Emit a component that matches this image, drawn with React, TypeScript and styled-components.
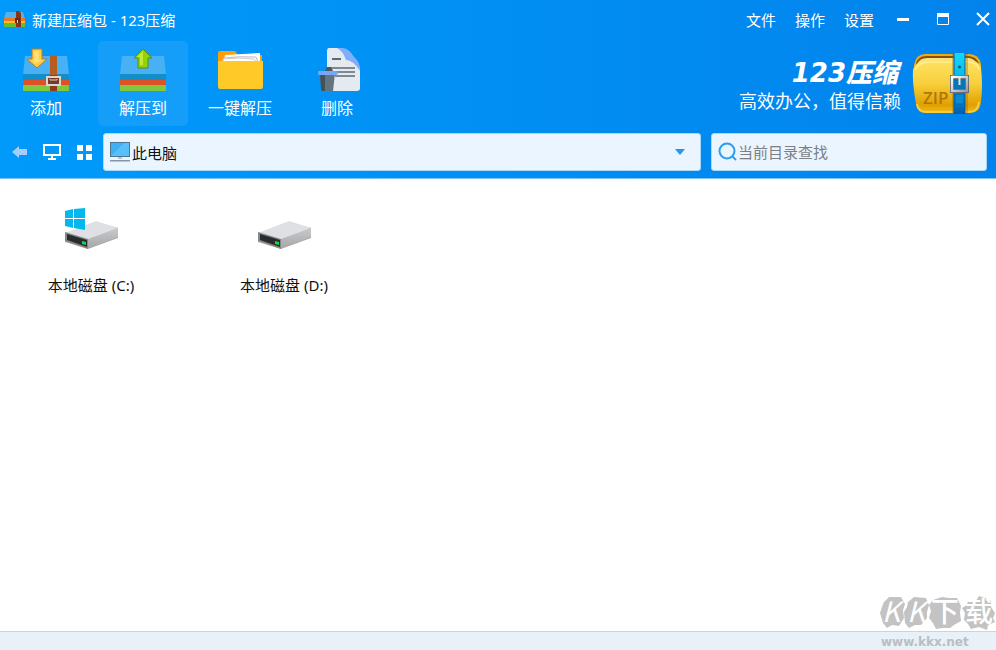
import React from 'react';
import styled, { createGlobalStyle } from 'styled-components';

const GlobalStyle = createGlobalStyle`
  *, *::before, *::after { box-sizing: border-box; }
  body {
    margin: 0;
    font-family: "Noto Sans", "Noto Sans CJK SC", sans-serif;
    font-size: 15px;
    color: #111;
    background: #fff;
  }
  button, input { font: inherit; color: inherit; }
  svg { display: block; flex: none; }
`;

const Window = styled.div`
  display: flex;
  flex-direction: column;
  min-height: 100vh;
`;

const Header = styled.header`
  background: linear-gradient(90deg, #009afb 0%, #0190f4 45%, #0283ec 100%);
  border-bottom: 1px solid #7cc2f6;
  color: #fff;
`;

const TitleBar = styled.div`
  display: flex;
  align-items: center;
  height: 40px;
  padding: 0 6px 2px 4px;
`;

const Title = styled.h1`
  flex: 1;
  margin: 0 0 0 7px;
  font-size: 15px;
  font-weight: 400;
`;

const PlainButton = styled.button`
  display: flex;
  align-items: center;
  justify-content: center;
  padding: 0;
  border: 0;
  background: none;
  cursor: pointer;
`;

const Menu = styled.nav`
  display: flex;
  gap: 19px;
  margin-right: 22px;
`;

const WindowControls = styled.div`
  display: flex;
  gap: 26px;
`;

const Toolbar = styled.div`
  display: flex;
  justify-content: space-between;
  height: 86px;
  padding: 1px 13px 0 1px;
`;

const Tools = styled.div`
  display: flex;
  gap: 7px;
`;

const ToolButton = styled(PlainButton)<{ $active?: boolean }>`
  flex-direction: column;
  justify-content: flex-start;
  gap: 1px;
  width: 90px;
  height: 85px;
  padding-top: 6px;
  border-radius: 5px;
  background: ${(p) => (p.$active ? '#149ef9' : 'transparent')};
  font-size: 16px;
  line-height: 24px;
`;

const Brand = styled.div`
  display: flex;
  align-items: center;
  gap: 11px;
`;

const BrandText = styled.div`
  padding-top: 4px;
  text-align: right;
`;

const BrandName = styled.div`
  padding-right: 3px;
  font-family: "DejaVu Sans", "Noto Sans CJK SC", sans-serif;
  font-size: 26px;
  font-weight: 900;
  font-style: italic;
  line-height: 28px;
`;

const Tagline = styled.div`
  font-family: "Noto Sans CJK SC", sans-serif;
  font-size: 18px;
  line-height: 26px;
`;

const NavRow = styled.div`
  display: flex;
  align-items: center;
  padding: 7px 9px 7px 12px;
`;

const NavButtons = styled.div`
  display: flex;
  align-items: center;
  gap: 15px;
  margin-right: 11px;
`;

const Field = styled.div<{ $search?: boolean }>`
  display: flex;
  align-items: center;
  gap: ${(p) => (p.$search ? 0 : 2)}px;
  flex: ${(p) => (p.$search ? '0 0 276px' : '1 1 0')};
  min-width: 0;
  height: 38px;
  margin-left: ${(p) => (p.$search ? 10 : 0)}px;
  padding: 0 ${(p) => (p.$search ? 7 : 15)}px 0 6px;
  border: 1px solid #a9d7f8;
  border-radius: 3px;
  background: #eaf5ff;
`;

const TextInput = styled.input`
  flex: 1;
  min-width: 0;
  padding: 0;
  border: 0;
  outline: 0;
  background: none;
  color: #111;
  &::placeholder { color: #7b8085; opacity: 1; }
`;

const Content = styled.main`
  flex: 1;
  padding: 27px 0 0 1px;
`;

const DriveGrid = styled.div`
  display: flex;
  flex-wrap: wrap;
  gap: 13px;
`;

const Drive = styled(PlainButton)`
  flex-direction: column;
  gap: 23px;
  width: 180px;
  line-height: 24px;
`;

const StatusBar = styled.footer`
  position: relative;
  height: 19px;
  border-top: 1px solid #bdd7ec;
  background: #e9f1f8;
`;

const Watermark = styled.div`
  position: absolute;
  right: 0;
  bottom: 0;
`;

const Chest = ({ strap }: { strap: boolean }) => (
  <svg width="48" height="48" viewBox="0 0 48 48" aria-hidden="true">
    <path d="M3 9h42l2 19H1z" fill="#48b0f5" />
    <path d="M1 27h46v7H1z" fill="#128fc9" />
    <path d="M1 33h46v6H1z" fill="#dc5128" />
    <path d="M1 38h46v6H1z" fill="#7fc73c" />
    {strap && (
      <>
        <path d="M28 9h7v20h-7z" fill="#b65e22" />
        <path d="M28 28h7v16h-7z" fill="#8b3c20" />
        <path d="M25 30h13v8H25z" fill="#7b3825" stroke="#d7d7d5" strokeWidth="2" />
        <path d="M28 32v1h7v-1" fill="none" stroke="#d8d3ce" />
        <path d="M10 2h10v10h5L15 21 5 12h5z" fill="#ffcf3e" stroke="#b97832" />
        <path d="M12 4h5v9h3l-8 4z" fill="#ffe070" />
      </>
    )}
    {!strap && (
      <>
        <path d="M24 2l9 9h-4v10H19V11h-4z" fill="#91d400" stroke="#568b16" />
        <path d="M24 4l-6 6h3v8h3z" fill="#bfea39" />
      </>
    )}
  </svg>
);

const Folder = () => (
  <svg width="48" height="48" viewBox="0 0 48 48" aria-hidden="true">
    <path d="M4 4h15l3 4h24v12H2V6q0-2 2-2z" fill="#ff9c08" />
    <path d="M9 8l35-2v12H7z" fill="#fff" />
    <path d="M8 11q15-2 32-1l2 5" fill="none" stroke="#bbb" />
    <path d="M7 12q16-2 31 0l3 4H7z" fill="#fff" stroke="#ccc" />
    <path d="M2 14h45v25q0 3-2 3H4q-2 0-2-3z" fill="#ffc928" />
  </svg>
);

const Trash = () => (
  <svg width="48" height="48" viewBox="0 0 48 48" aria-hidden="true">
    <path d="M16 1h13q16 9 18 22v18q0 3-3 3H14V4q0-3 2-3z" fill="#e4eaf0" />
    <path d="M24 1h5q7 0 12 9 6 4 6 14-7-11-14-11-3-9-9-12z" fill="#80aefa" />
    <path d="M19 12h9" stroke="#5c6a71" strokeWidth="2" />
    <path d="M18 21h24M18 25h24M22 29h20" stroke="#5c6a71" strokeWidth="1.5" />
    <path d="M13 22l1-2h4l2 4h-8z" fill="#4a5960" />
    <path d="M7 26h15l-2 18h-10q-2 0-2-2z" fill="#62747e" />
    <path d="M7 26h5v18h-2q-2 0-2-2z" fill="#42515a" />
    <path d="M6 24h17q2 0 2 2t-2 2H6q-1 0-1-2t1-2z" fill="#78a8f5" />
  </svg>
);

const AppIcon = () => (
  <svg width="21" height="18" viewBox="0 0 21 18" aria-hidden="true">
    <path d="M2 2h17l2 7H0z" fill="#54b2ea" />
    <path d="M0 8h21v3H0z" fill="#f07920" />
    <path d="M0 11h21v2H0z" fill="#ffbd2a" />
    <path d="M0 13h21v4H0z" fill="#65bd36" />
    <path d="M12 1h3l2 2v14h-5z" fill="#8b3517" />
    <path d="M11 8h5v5h-5z" fill="#682b18" />
    <path d="M13 10h1v3h-1z" fill="#f5d6af" />
  </svg>
);

const ZipLogo = () => (
  <svg width="71" height="62" viewBox="0 0 71 62" aria-hidden="true">
    <defs>
      <linearGradient id="gold" x2="0" y2="1">
        <stop stopColor="#ffe264" />
        <stop offset=".45" stopColor="#f8cf3b" />
        <stop offset=".85" stopColor="#e0a000" />
        <stop offset="1" stopColor="#f3bd1c" />
      </linearGradient>
      <linearGradient id="belt" x2="0" y2="1">
        <stop stopColor="#16d9fb" />
        <stop offset=".45" stopColor="#07b3e8" />
        <stop offset="1" stopColor="#045bae" />
      </linearGradient>
      <linearGradient id="silver" x2="1" y2="1">
        <stop stopColor="#fff" />
        <stop offset="1" stopColor="#979a9e" />
      </linearGradient>
    </defs>
    <path d="M13 1h44q10 0 12 10v9H2v-8Q4 1 13 1z" fill="#e9ad18" />
    <path d="M4 11Q6 3 14 3h43q8 1 10 8l-8-4H15z" fill="#895108" />
    <path d="M5 11Q8 5 15 5h42q6 1 9 7l-9-3H15z" fill="#fae18a" />
    <path d="M4 12q5-5 12-5h40q11 0 13 8 2 16 0 34-1 11-11 11H14Q5 60 4 51 0 28 1 17q0-3 3-5z" fill="url(#gold)" />
    <path d="M3 17q4-8 13-8h40q9 0 11 7" fill="none" stroke="#fff097" strokeWidth="1.5" />
    <path d="M5 51q1 8 10 8h42q9 0 10-10" fill="none" stroke="#f9ce3d" strokeWidth="2" />
    <text x="11" y="51" fontFamily="Open Sans, sans-serif" fontSize="17" fontWeight="600" fill="#b17508">ZIP</text>
    <path d="M40 1h3v60h-3zM54 1h2v60h-2z" fill="#8b6820" opacity=".35" />
    <path d="M42 0h11v61H42z" fill="url(#belt)" />
    <path d="M42 0v61M53 0v61" stroke="#07569b" />
    <circle cx="47.5" cy="14" r="1.5" fill="#075b83" />
    <path d="M43 41h9v8q0 2-2 2h-5q-2 0-2-2z" fill="#098bd3" stroke="#0766af" />
    <path d="M40 24h15v14H40z" fill="#0875b6" stroke="#555c63" strokeWidth="4" />
    <path d="M40 24h15v14H40z" fill="none" stroke="url(#silver)" strokeWidth="2.5" />
    <path d="M47.500 23v9" stroke="#e3e8eb" strokeWidth="2" />
  </svg>
);

const DriveIcon = ({ system, id }: { system: boolean; id: string }) => (
  <svg width="56" height="44" viewBox="0 0 56 44" aria-hidden="true">
    <defs>
      <linearGradient id={id} x2="0" y2="1">
        <stop stopColor="#c8c9ca" />
        <stop offset="1" stopColor="#a7a8a9" />
      </linearGradient>
    </defs>
    <path d="M2 28l31-12 22 6v10L25 43 2 36z" fill="#aaa" />
    <path d="M2 27l31-12 22 7-30 12z" fill="#dfe0e4" />
    <path d="M25 33l30-11v9L25 42z" fill={`url(#${id})`} />
    <path d="M2 26l23 7v10L2 35z" fill="#85878a" />
    <path d="M4 28l20 6v7L4 34z" fill="#292c2e" />
    <path d="M19 35l4 1v3l-4-1z" fill="#18d642" />
    {system && (
      <path d="M2 5l8-2v9H2zM11 3l11-1v10H11zM2 13h8v9l-8-2zM11 13h11v11l-11-2z" fill="#04b8ef" />
    )}
  </svg>
);

const tools = [
  { label: '添加', icon: <Chest strap /> },
  { label: '解压到', icon: <Chest strap={false} />, active: true },
  { label: '一键解压', icon: <Folder /> },
  { label: '删除', icon: <Trash /> },
];

export default function App() {
  return (
    <Window>
      <GlobalStyle />
      <Header>
        <TitleBar>
          <AppIcon />
          <Title>新建压缩包 - 123压缩</Title>
          <Menu>
            {['文件', '操作', '设置'].map((item) => (
              <PlainButton key={item}>{item}</PlainButton>
            ))}
          </Menu>
          <WindowControls>
            <PlainButton aria-label="最小化">
              <svg width="14" height="14" viewBox="0 0 14 14"><path d="M1 7.5h12" stroke="#fff" strokeWidth="3" /></svg>
            </PlainButton>
            <PlainButton aria-label="最大化">
              <svg width="14" height="14" viewBox="0 0 14 14"><path d="M1.500 2v10.500h11V2" fill="none" stroke="#fff" /><path d="M1 1h12v4H1z" fill="#fff" /></svg>
            </PlainButton>
            <PlainButton aria-label="关闭">
              <svg width="14" height="14" viewBox="0 0 14 14"><path d="M1 1l12 12M13 1L1 13" stroke="#fff" strokeWidth="2" /></svg>
            </PlainButton>
          </WindowControls>
        </TitleBar>
        <Toolbar>
          <Tools>
            {tools.map((tool) => (
              <ToolButton key={tool.label} $active={tool.active}>
                {tool.icon}
                {tool.label}
              </ToolButton>
            ))}
          </Tools>
          <Brand>
            <BrandText>
              <BrandName>123压缩</BrandName>
              <Tagline>高效办公，值得信赖</Tagline>
            </BrandText>
            <ZipLogo />
          </Brand>
        </Toolbar>
        <NavRow>
          <NavButtons>
            <PlainButton aria-label="后退">
              <svg width="16" height="16" viewBox="0 0 16 16"><path d="M0 8l7-6v3h8v6H7v3z" fill="#a6cdf7" /></svg>
            </PlainButton>
            <PlainButton aria-label="此电脑">
              <svg width="18" height="16" viewBox="0 0 18 16"><path d="M1 1h16v10H1z" fill="none" stroke="#fff" strokeWidth="2" /><path d="M8 11h2v3h3v2H5v-2h3z" fill="#fff" /></svg>
            </PlainButton>
            <PlainButton aria-label="视图">
              <svg width="16" height="16" viewBox="0 0 16 16"><path d="M1 1h6v6H1zM10 1h6v6h-6zM1 10h6v6H1zM10 10h6v6h-6z" fill="#fff" /></svg>
            </PlainButton>
          </NavButtons>
          <Field>
            <svg width="20" height="20" viewBox="0 0 20 20" aria-hidden="true">
              <path d="M0 0h20v15H0z" fill="#4b7890" />
              <path d="M1 1h18v13H1z" fill="#40aff3" />
              <path d="M1 14L14 1h5v13z" fill="#5abefa" />
              <path d="M8 15h4v2H8z" fill="#b8c5cf" />
              <path d="M0 18h20v1.500H0z" fill="#8497a6" />
            </svg>
            <TextInput aria-label="地址" defaultValue="此电脑" />
            <PlainButton aria-label="展开地址列表">
              <svg width="10" height="6" viewBox="0 0 10 6"><path d="M0 0h10L5 6z" fill="#1c9aee" /></svg>
            </PlainButton>
          </Field>
          <Field $search>
            <svg width="20" height="20" viewBox="0 0 20 20" aria-hidden="true">
              <circle cx="9" cy="9" r="7.5" fill="none" stroke="#2b9fea" strokeWidth="2" />
              <path d="M14 14l4 4" stroke="#2b9fea" strokeWidth="2" />
            </svg>
            <TextInput aria-label="当前目录查找" placeholder="当前目录查找" />
          </Field>
        </NavRow>
      </Header>
      <Content>
        <DriveGrid>
          <Drive><DriveIcon id="drive-c" system />本地磁盘 (C:)</Drive>
          <Drive><DriveIcon id="drive-d" system={false} />本地磁盘 (D:)</Drive>
        </DriveGrid>
      </Content>
      <StatusBar>
        <Watermark>
          <svg width="120" height="66" viewBox="0 -10 120 66">
            <g fill="#c3c3c3">
              <path d="M8 8l5-5 12 0 4 7-2 6 1 8-5 8-7-1-5 3-4-5-3-10 2-6z" />
              <path d="M32 8l6-5 12 1 3 7-2 7 0 6-6 7-6 0-6 3-4-5-1-11 3-5z" />
              <path d="M57 6l9-3 7 1 8 0 4 8-1 7 1 8-7 4-4 3-7 0-7 1-3-6-4-5 2-7-2-6z" />
              <path d="M92 7l8 0 3-5 6 2 6 3 0 6 4 6-2 5 2 4-7 3-1 5-8-3-8 2-3-5-4-4 1-7-3-5 5-3z" />
            </g>
            <g fill="#fff" fontFamily="Noto Sans CJK SC, sans-serif" fontSize="28" fontStyle="italic">
              <text x="6" y="28">K</text>
              <text x="31" y="28">K</text>
            </g>
            <g fill="#fff" fontFamily="Noto Sans CJK SC, sans-serif" fontSize="28" fontWeight="500">
              <text x="55" y="28">下</text>
              <text x="89" y="28">载</text>
            </g>
            <text x="5" y="52" fill="#b9bec3" fontFamily="DejaVu Sans, sans-serif" fontSize="12" fontWeight="700">www.kkx.net</text>
          </svg>
        </Watermark>
      </StatusBar>
    </Window>
  );
}
